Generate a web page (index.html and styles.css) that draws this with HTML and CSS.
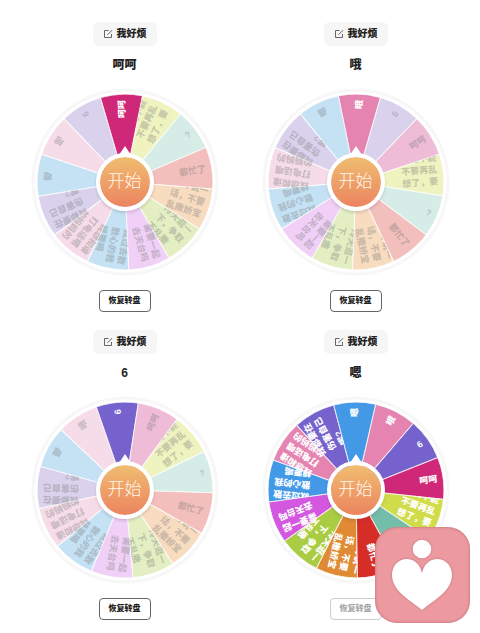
FILE: index.html
```html
<!DOCTYPE html>
<html lang="zh-CN">
<head>
<meta charset="utf-8">
<meta name="viewport" content="width=device-width, initial-scale=1">
<title>我好烦</title>
<link rel="stylesheet" href="styles.css">
</head>
<body>
<main class="board"></main>

<div class="badge">
  <svg viewBox="0 0 95 96" aria-hidden="true">
    <circle class="badge-shape" cx="47" cy="22" r="9.3"/>
    <path class="badge-shape" d="M47 46 C45 37 39 32 32 32 C23 32 17 39 17 48 C17 64 35 73 47 83 C59 73 77 64 77 48 C77 39 71 32 62 32 C55 32 49 37 47 46 Z"/>
  </svg>
</div>

<template id="card">
  <section class="card">
    <button class="topic" type="button">
      <svg class="edit-icon" viewBox="0 0 10 10" aria-hidden="true"><path d="M5.5 1.5H1.5V8.5H8.5V5M4.5 5.8L9 1.2"/></svg>
      <span>我好烦</span>
    </button>
    <p class="result"></p>
    <div class="wheel">
      <svg class="disc" viewBox="-94 -94 188 188"></svg>
      <button class="start" type="button">开始</button>
    </div>
    <button class="reset" type="button">恢复转盘</button>
  </section>
</template>
<script src="wheel.js"></script>
</body>
</html>
```
FILE: wheel.js
```js
const segments = [
  { color: 'blue', lines: ['嗯'] },
  { color: 'pink', lines: ['哦'] },
  { color: 'purple', lines: ['6'] },
  { color: 'magenta', lines: ['呵呵'] },
  { color: 'yellow', lines: ['你能不能', '不要再乱', '想了，要'], first: -18 },
  { color: 'teal', lines: ['?'] },
  { color: 'red', lines: ['都忙了'] },
  { color: 'orange', lines: ['好好说一', '话，不要', '乱撒娇宝'], first: -17 },
  { color: 'green', lines: ['冷天逛一', '下，争取', '不乱撒'] },
  { color: 'violet', lines: ['需要一起', '去天台吗'], first: -9 },
  { color: 'blue', lines: ['就过去散', '散心的我', '想要喝'] },
  { color: 'pink', lines: ['我想和谁', '打电话喂', '的妈妈的'] },
  { color: 'purple', lines: ['我都要在', '伤害自己', '呢?'] }
];

const wheels = [
  { result: '呵呵', picked: 3, tilt: -2.4 },
  { result: '哦', picked: 1, tilt: 2.3 },
  { result: '6', picked: 2, tilt: -5.2 },
  { result: '嗯', picked: 0, tilt: -0.9, idle: true }
];

const NS = 'http://www.w3.org/2000/svg';
const STEP = 360 / segments.length;
const RADIUS = 88;
const TEXT_END = 82;
const CHAR = 9;
const LINE = 12;

function add(parent, name, attrs) {
  const node = document.createElementNS(NS, name);
  Object.entries(attrs).forEach(([key, value]) => node.setAttribute(key, value));
  parent.append(node);
  return node;
}

function drawWheel(svg, wheel, id) {
  add(svg, 'circle', { r: 92, class: 'rim' });

  // One slice centred on the positive x axis clips the text of every segment.
  const half = (STEP / 2) * Math.PI / 180;
  const x = RADIUS * Math.cos(half);
  const y = RADIUS * Math.sin(half);
  const slice = `M0 0L${x} ${-y}A${RADIUS} ${RADIUS} 0 0 1 ${x} ${y}Z`;
  const clip = add(svg, 'clipPath', { id: `slice-${id}` });
  add(clip, 'path', { d: slice });

  segments.forEach((segment, i) => {
    const angle = (i - wheel.picked) * STEP + wheel.tilt - 90;
    const faded = !wheel.idle && i !== wheel.picked;
    const group = add(svg, 'g', {
      transform: `rotate(${angle})`,
      'clip-path': `url(#slice-${id})`,
      class: `segment ${segment.color}${faded ? ' faded' : ''}`
    });
    add(group, 'path', { d: slice });

    const short = /^[6?]$/.test(segment.lines[0]);
    const longest = Math.max(...segment.lines.map(line => line.length));
    const start = TEXT_END - (short ? 6 : longest * CHAR);
    const first = segment.first ?? -(segment.lines.length - 1) * LINE / 2;
    segment.lines.forEach((line, n) => {
      add(group, 'text', { x: start, y: first + n * LINE + 3 }).textContent = line;
    });
  });

  add(svg, 'path', { d: 'M0 -36L-8 -24H8Z', class: 'pointer' });
}

const board = document.querySelector('.board');
const template = document.querySelector('#card');
wheels.forEach((wheel, id) => {
  const card = template.content.cloneNode(true);
  card.querySelector('.result').textContent = wheel.result;
  card.querySelector('.reset').disabled = Boolean(wheel.idle);
  drawWheel(card.querySelector('.disc'), wheel, id);
  board.append(card);
});
```
FILE: styles.css
```css
* {
  box-sizing: border-box;
}

body {
  margin: 0;
  background: #fff;
  color: #222;
  font-family: "Liberation Sans", "Noto Sans CJK SC", sans-serif;
}

button {
  padding: 0;
  border: 0;
  font-family: inherit;
  cursor: pointer;
}

.board {
  display: grid;
  grid-template-columns: 1fr 1fr;
  row-gap: 18px;
  padding: 22px 9px 12px;
}

.card {
  display: flex;
  flex-direction: column;
  align-items: center;
}

.topic {
  display: flex;
  align-items: center;
  gap: 4px;
  height: 24px;
  padding: 0 10px;
  border-radius: 6px;
  background: #f6f6f6;
  color: #222;
  font-size: 10px;
  font-weight: 900;
  line-height: 16px;
}

.edit-icon {
  width: 10px;
  height: 10px;
  fill: none;
  stroke: #666;
  stroke-width: 1;
}

.result {
  margin: 9px 0 13px;
  font-size: 12px;
  font-weight: 900;
  line-height: 20px;
}

.wheel {
  display: grid;
  place-items: center;
  margin-bottom: 14px;
}

.disc,
.start {
  grid-area: 1 / 1;
}

.disc {
  display: block;
  width: 188px;
  height: 188px;
}

.rim {
  fill: #fff;
  stroke: #f7f7f7;
  stroke-width: 3;
}

.segment path {
  fill: var(--full);
  stroke: #fff;
  stroke-width: 1;
}

.segment text {
  fill: #fff;
  font-size: 9px;
  font-weight: 900;
}

.segment.faded path {
  fill: var(--pale);
}

.segment.faded text {
  fill: #777;
  fill-opacity: 0.36;
}

.blue { --full: #4499e7; --pale: #c5e2f5; }
.pink { --full: #e583b1; --pale: #f5dce8; }
.purple { --full: #7562cc; --pale: #dad2ed; }
.magenta { --full: #d02878; --pale: #efbcd7; }
.yellow { --full: #d0dc4a; --pale: #eff3c0; }
.teal { --full: #74bda9; --pale: #d6ece6; }
.red { --full: #d72d27; --pale: #f2bfbc; }
.orange { --full: #e08a33; --pale: #f8dcc0; }
.green { --full: #aacc42; --pale: #e3efc2; }
.violet { --full: #d457e0; --pale: #f0d0f6; }

.pointer {
  fill: #fff;
}

.start {
  width: 58px;
  height: 58px;
  border: 4px solid #fff;
  border-radius: 50%;
  background: linear-gradient(#f0bd70, #ec8460) padding-box;
  box-shadow: 0 2px 3px rgba(90, 60, 90, 0.2);
  color: #fff8ec;
  font-size: 17px;
  font-weight: 300;
  line-height: 24px;
}

.reset {
  width: 52px;
  height: 22px;
  border: 1px solid #666;
  border-radius: 4px;
  background: #fff;
  color: #222;
  font-size: 8px;
  font-weight: 900;
  line-height: 12px;
}

.reset:disabled {
  border-color: #ccc;
  color: #aaa;
}

.badge {
  position: fixed;
  right: 10px;
  bottom: 10px;
  width: 95px;
  height: 96px;
  border-radius: 22px;
  background: #ec9aa0;
  box-shadow: inset 0 0 3px rgba(130, 50, 60, 0.5);
}

.badge svg {
  display: block;
  width: 100%;
  height: 100%;
}

.badge-shape {
  fill: #fff;
  filter: drop-shadow(0 0 1px rgba(140, 60, 70, 0.5));
}
```
